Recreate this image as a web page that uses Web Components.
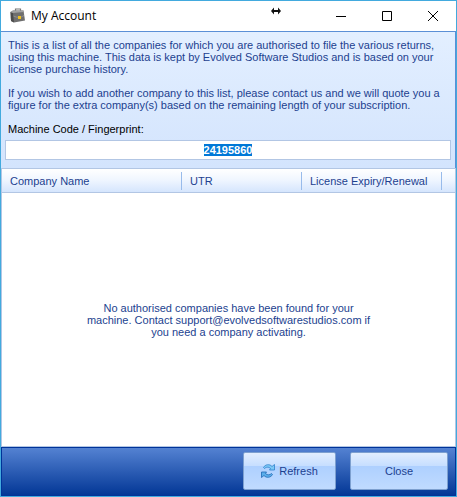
<!DOCTYPE html>
<html lang="en">
<head>
<meta charset="utf-8">
<meta name="viewport" content="width=device-width, initial-scale=1">
<title>My Account</title>
<style>
  html, body {
    height: 100%;
    margin: 0;
  }

  body {
    font: 11px/12px "Liberation Sans", Arial, sans-serif;
    color: #1c3f8f;
    --edge: #98bbeb;
    --rule: #b2c6e4;
  }
</style>
</head>
<body>

<account-window heading="My Account">
  <intro-panel slot="intro">
    <p>This is a list of all the companies for which you are authorised to file the various returns, using this machine. This data is kept by Evolved Software Studios and is based on your license purchase history.</p>
    <p>If you wish to add another company to this list, please contact us and we will quote you a figure for the extra company(s) based on the remaining length of your subscription.</p>
    <machine-code slot="code" value="24195860"></machine-code>
  </intro-panel>
  <company-list>No authorised companies have been found for your machine. Contact support@evolvedsoftwarestudios.com if you need a company activating.</company-list>
  <action-bar slot="actions">
    <action-button>
      <svg slot="icon" width="14" height="14" viewBox="0 0 14 14">
        <path d="M2.5 3.5C4 .5 8.500-.5 11 2.500L13.500.5V6H8.500L9.500 4.500C7.500 2.500 5 3 3.500 4.500Z" fill="#7cc8f5" stroke="#2f82cb" stroke-width=".8"/>
        <path d="M11.500 10.500C10 13.500 5.500 14.500 3 11.500L.5 13.500V8H5.500L4.500 9.500C6.500 11.500 9 11 10.500 9.500Z" fill="#5aaeea" stroke="#1f68b4" stroke-width=".8"/>
      </svg>
      Refresh
    </action-button>
    <action-button>Close</action-button>
  </action-bar>
</account-window>

<script>
class AccountWindow extends HTMLElement {
  constructor() {
    super();
    this.attachShadow({ mode: "open" });
    this.shadowRoot.innerHTML = `
      <style>
        :host {
          box-sizing: border-box;
          display: flex;
          flex-direction: column;
          min-height: 100%;
          border: 1px solid #42aade;
          background: #fff;
        }

        header {
          position: relative;
          display: flex;
          align-items: center;
          height: 30px;
          padding-left: 8px;
          color: #000;
        }

        h1 {
          flex: 1;
          margin: 0 0 0 5px;
          font: 12px/16px "Open Sans", "Noto Sans", sans-serif;
        }

        header button {
          width: 46px;
          height: 30px;
          padding: 0;
          border: 0;
          background: none;
        }

        button svg, .app {
          display: block;
          margin: 0 auto;
        }

        .app {
          margin: 0;
        }

        /* horizontal resize pointer, floats over the title bar */
        .pointer {
          position: absolute;
          left: 270px;
          top: 6px;
        }

        main {
          flex: 1;
          display: flex;
          flex-direction: column;
        }
      </style>

      <header>
        <svg class="app" width="17" height="16" viewBox="0 0 17 16">
          <path d="M6.500 3V1H11.500V3" fill="none" stroke="#777" stroke-width="1.2"/>
          <path d="M1.500 4L4 2.500H14.500L16 12.500L5 14.500L2 13Z" fill="#6f6f6f"/>
          <path d="M1.500 4L4 5L5 14.500L2 13Z" fill="#4c4c4c"/>
          <path d="M1.500 4L4 2.500H14.500V4L4 5Z" fill="#a3a3a3"/>
          <path d="M4.500 8Q10 11 15 7.500" stroke="#909090" fill="none"/>
          <rect x="9" y="8" width="3" height="3" fill="#f0c020"/>
        </svg>
        <h1></h1>
        <button type="button" aria-label="Minimise">
          <svg width="10" height="10"><path d="M0 5.5H10" stroke="#000"/></svg>
        </button>
        <button type="button" aria-label="Maximise">
          <svg width="10" height="10"><path d="M.5.5H9.5V9.5H.5Z" stroke="#000" fill="none"/></svg>
        </button>
        <button type="button" aria-label="Close window">
          <svg width="10" height="10"><path d="M0 0L10 10M10 0L0 10" stroke="#000"/></svg>
        </button>
        <svg class="pointer" width="10" height="8" viewBox="0 0 10 8">
          <path d="M0 4L3 .5V3H7V.5L10 4L7 7.500V5H3V7.500Z" fill="#111"/>
        </svg>
      </header>
      <slot name="intro"></slot>
      <main><slot></slot></main>
      <slot name="actions"></slot>
    `;
  }

  connectedCallback() {
    this.shadowRoot.querySelector("h1").textContent = this.getAttribute("heading");
  }
}

class IntroPanel extends HTMLElement {
  constructor() {
    super();
    this.attachShadow({ mode: "open" });
    this.shadowRoot.innerHTML = `
      <style>
        :host {
          display: flex;
          flex-direction: column;
          gap: 12px;
          padding: 7px 4px 8px;
          border: solid #5b8fd6;
          border-width: 1px 1px 0 0;
          background: linear-gradient(#e3efff, #d3e4fd);
        }

        ::slotted(p) {
          margin: 0;
          padding: 0 3px;
        }
      </style>
      <slot></slot>
      <slot name="code"></slot>
    `;
  }
}

class MachineCode extends HTMLElement {
  constructor() {
    super();
    this.attachShadow({ mode: "open" });
    this.shadowRoot.innerHTML = `
      <style>
        :host {
          display: block;
        }

        label {
          display: block;
          margin-bottom: 5px;
          padding: 0 3px;
          color: #000;
        }

        input {
          box-sizing: border-box;
          display: block;
          width: 100%;
          height: 20px;
          padding: 0;
          border: 1px solid var(--rule);
          outline: 0;
          background: #fff;
          color: #1c3f8f;
          font: bold 11px/14px "Liberation Sans", Arial, sans-serif;
          text-align: center;
        }

        input::selection {
          background: #0078d7;
          color: #fff;
        }
      </style>
      <label for="code">Machine Code / Fingerprint:</label>
      <input id="code" type="text" readonly>
    `;
  }

  connectedCallback() {
    const input = this.shadowRoot.querySelector("input");
    input.value = this.getAttribute("value");
    input.focus();
    input.select();
  }
}

class CompanyList extends HTMLElement {
  constructor() {
    super();
    this.attachShadow({ mode: "open" });
    this.shadowRoot.innerHTML = `
      <style>
        :host {
          flex: 1;
          display: flex;
          flex-direction: column;
          border: 1px solid var(--rule);
        }

        table {
          width: 100%;
          table-layout: fixed;
          border-collapse: collapse;
          border-bottom: 1px solid var(--rule);
          background: linear-gradient(#fff, #f0f6ff 45%, #d3e4fd);
        }

        .name { width: 180px; }
        .utr { width: 120px; }
        .expiry { width: 140px; }

        th, td {
          height: 23px;
          padding: 0;
          font-weight: normal;
          text-align: left;
        }

        th span {
          display: block;
          padding-left: 8px;
          border-right: 1px solid var(--edge);
          line-height: 18px;
          white-space: nowrap;
        }

        .empty {
          flex: 1;
          display: flex;
          align-items: center;
          justify-content: center;
        }

        p {
          max-width: 294px;
          margin: 0;
          text-align: center;
        }
      </style>
      <table>
        <colgroup><col class="name"><col class="utr"><col class="expiry"><col></colgroup>
        <thead>
          <tr>
            <th scope="col"><span>Company Name</span></th>
            <th scope="col"><span>UTR</span></th>
            <th scope="col"><span>License Expiry/Renewal</span></th>
            <td></td>
          </tr>
        </thead>
      </table>
      <div class="empty"><p><slot></slot></p></div>
    `;
  }
}

class ActionBar extends HTMLElement {
  constructor() {
    super();
    this.attachShadow({ mode: "open" });
    this.shadowRoot.innerHTML = `
      <style>
        :host {
          display: flex;
          justify-content: flex-end;
          gap: 14px;
          padding: 4px 7px 5px;
          border: 1px solid #003399;
          background: linear-gradient(#5482d2, #033796);
        }
      </style>
      <slot></slot>
    `;
  }
}

class ActionButton extends HTMLElement {
  constructor() {
    super();
    this.attachShadow({ mode: "open" });
    this.shadowRoot.innerHTML = `
      <style>
        :host {
          display: block;
          min-width: 93px;
        }

        :host(:last-of-type) {
          min-width: 98px;
        }

        button {
          display: flex;
          align-items: center;
          justify-content: center;
          gap: 4px;
          width: 100%;
          height: 38px;
          padding: 0;
          border: 1px solid #7da0d0;
          border-radius: 2px;
          background: linear-gradient(#e2eeff, #c6deff 36%, #aed0ff 37%, #c0dbff);
          color: inherit;
          font: inherit;
        }
      </style>
      <button type="button"><slot name="icon"></slot><span><slot></slot></span></button>
    `;
  }
}

customElements.define("account-window", AccountWindow);
customElements.define("intro-panel", IntroPanel);
customElements.define("machine-code", MachineCode);
customElements.define("company-list", CompanyList);
customElements.define("action-bar", ActionBar);
customElements.define("action-button", ActionButton);
</script>
</body>
</html>
